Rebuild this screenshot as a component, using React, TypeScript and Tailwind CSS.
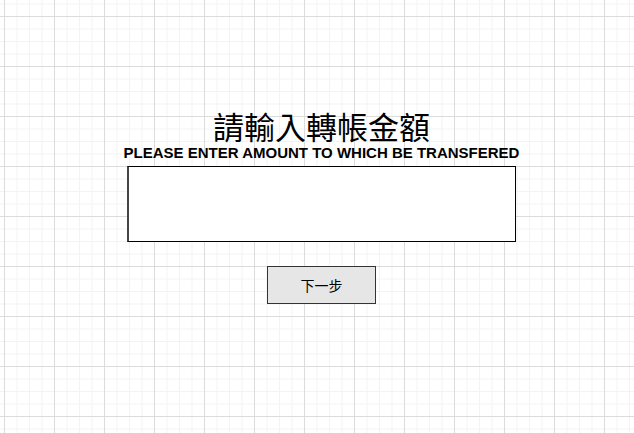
export default function App() {
  return (
    <div className="w-[634px] h-[433px] overflow-hidden bg-white bg-[linear-gradient(to_right,#dcdcdc_1px,transparent_1px),linear-gradient(to_bottom,#dcdcdc_1px,transparent_1px),linear-gradient(to_right,#f3f3f3_1px,transparent_1px),linear-gradient(to_bottom,#f3f3f3_1px,transparent_1px)] bg-[length:50px_50px,50px_50px,12.5px_12.5px,12.5px_12.5px] bg-[position:4px_16px]">
      <div className="flex flex-col items-center pt-[110px] pl-[9px]">
        {/* Title */}
        <h1 className="text-[31px] leading-[32px] text-black font-['Noto_Sans_CJK_TC',serif]">
          請輸入轉帳金額
        </h1>
        <p className="mt-[3px] text-[15px] leading-[16px] font-bold text-black font-['Liberation_Sans',Arial,sans-serif]">
          PLEASE ENTER AMOUNT TO WHICH BE TRANSFERED
        </p>

        {/* Amount input */}
        <input
          type="text"
          className="mt-[5px] w-[389px] h-[76px] bg-white border border-black border-l-2 border-l-[#444] outline-none px-2 text-lg"
        />

        {/* Next button */}
        <button className="mt-[24px] w-[109px] h-[38px] bg-[#e6e6e6] border-[1.5px] border-[#333] text-[14px] text-black font-['Noto_Sans_CJK_TC',sans-serif]">
          下一步
        </button>
      </div>
    </div>
  );
}
